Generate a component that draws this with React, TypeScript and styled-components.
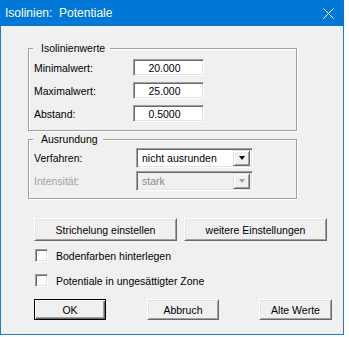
import React, { FC } from "react";
import styled, { createGlobalStyle } from "styled-components";

const GlobalStyle = createGlobalStyle`
  body {
    margin: 0;
    background: #ffffff;
    font-family: "Liberation Sans", Arial, sans-serif;
  }
`;

const Window = styled.div`
  width: 344px;
  height: 335px;
  box-sizing: border-box;
  border: 1px solid #1a7fd6;
  border-top: none;
  background: #f0f0f0;
  display: flex;
  flex-direction: column;
`;

const TitleBar = styled.div`
  height: 26px;
  margin: 0 -1px;
  background: #0078d7;
  display: flex;
  align-items: center;
  justify-content: space-between;
  padding: 0 10px 0 5px;
  color: #ffffff;
  font-size: 12px;
  white-space: pre;
`;

const Content = styled.div`
  flex: 1;
  padding: 22px 0 0 27px;
  display: flex;
  flex-direction: column;
  font-size: 10.5px;
  color: #000000;
`;

const Group = styled.div<{ $top?: number; $pt: number; $pb: number }>`
  position: relative;
  width: 269px;
  box-sizing: border-box;
  margin-top: ${({ $top }) => $top ?? 0}px;
  padding: ${({ $pt, $pb }) => `${$pt}px 0 ${$pb}px 5px`};
  border: 1px solid #a0a0a0;
  box-shadow: 1px 1px 0 #ffffff, inset 1px 1px 0 #ffffff;
  display: flex;
  flex-direction: column;
`;

const Caption = styled.span`
  position: absolute;
  top: -7px;
  left: 4px;
  padding: 0 5px 0 8px;
  background: #f0f0f0;
  line-height: 13px;
`;

const FieldRow = styled.div<{ $h: number; $gap: number; $label: number }>`
  height: ${({ $h }) => $h}px;
  margin-bottom: ${({ $gap }) => $gap}px;
  display: grid;
  grid-template-columns: ${({ $label }) => $label}px auto;
  align-items: center;
  &:last-child {
    margin-bottom: 0;
  }
`;

const Label = styled.span<{ $disabled?: boolean }>`
  color: ${({ $disabled }) => ($disabled ? "#a0a0a0" : "#000000")};
`;

const Sunken = styled.div`
  box-sizing: border-box;
  border: 1px solid;
  border-color: #a0a0a0 #ffffff #ffffff #a0a0a0;
  box-shadow: inset 1px 1px 0 #696969, inset -1px -1px 0 #e3e3e3;
`;

const EditBox = styled(Sunken)`
  width: 71px;
  height: 17px;
  background: #ffffff;
  display: flex;
  align-items: center;
  justify-content: center;
  padding-right: 8px;
`;

const Combo = styled(Sunken)<{ $disabled?: boolean }>`
  width: 117px;
  height: 20px;
  padding: 2px 2px 2px 5px;
  background: ${({ $disabled }) => ($disabled ? "#f0f0f0" : "#ffffff")};
  color: ${({ $disabled }) => ($disabled ? "#8a8a8a" : "#000000")};
  display: flex;
  align-items: center;
  justify-content: space-between;
`;

const DropButton = styled.div<{ $disabled?: boolean }>`
  width: 17px;
  height: 16px;
  box-sizing: border-box;
  border: 1px solid;
  border-color: #e3e3e3 #696969 #696969 #e3e3e3;
  box-shadow: inset 1px 1px 0 #ffffff, inset -1px -1px 0 #a0a0a0;
  background: #f0f0f0;
  display: flex;
  align-items: center;
  justify-content: center;
  &::after {
    content: "";
    border-left: 3.5px solid transparent;
    border-right: 3.5px solid transparent;
    border-top: 4px solid ${({ $disabled }) => ($disabled ? "#a0a0a0" : "#000000")};
  }
`;

const ButtonRow = styled.div<{ $top: number; $gap?: number }>`
  margin-top: ${({ $top }) => $top}px;
  padding-left: 6px;
  display: flex;
  gap: ${({ $gap }) => $gap ?? 0}px;
`;

const Button = styled.div<{ $w: number; $h: number; $default?: boolean; $ml?: number }>`
  width: ${({ $w }) => $w}px;
  height: ${({ $h }) => $h}px;
  margin-left: ${({ $ml }) => $ml ?? 0}px;
  box-sizing: border-box;
  border: 1px solid;
  border-color: ${({ $default }) =>
    $default ? "#000000" : "#ffffff #696969 #696969 #ffffff"};
  box-shadow: ${({ $default }) =>
    $default
      ? "inset 1px 1px 0 #ffffff, inset -1px -1px 0 #696969, inset -2px -2px 0 #a0a0a0"
      : "inset 1px 1px 0 #e3e3e3, inset -1px -1px 0 #a0a0a0"};
  background: #f0f0f0;
  display: flex;
  align-items: center;
  justify-content: center;
`;

const CheckList = styled.div`
  margin-top: 8px;
  padding-left: 7px;
  display: flex;
  flex-direction: column;
  gap: 12px;
`;

const CheckRow = styled.label`
  height: 13px;
  display: flex;
  align-items: center;
  gap: 8px;
`;

const CheckBox = styled(Sunken)`
  width: 13px;
  height: 13px;
  background: #ffffff;
`;

const CloseIcon: FC = () => (
  <svg width="11" height="11" viewBox="0 0 11 11">
    <path d="M0.5 0.5 L10.5 10.5 M10.5 0.5 L0.5 10.5" stroke="#ffffff" strokeWidth="1" />
  </svg>
);

const values = [
  { label: "Minimalwert:", value: "20.000" },
  { label: "Maximalwert:", value: "25.000" },
  { label: "Abstand:", value: "0.5000" },
];

const App: FC = () => {
  return (
    <>
      <GlobalStyle />
      <Window>
        <TitleBar>
          <span>{"Isolinien:  Potentiale"}</span>
          <CloseIcon />
        </TitleBar>
        <Content>
          <Group $pt={10} $pb={8}>
            <Caption>Isolinienwerte</Caption>
            {values.map((v) => (
              <FieldRow key={v.label} $h={17} $gap={6} $label={99}>
                <Label>{v.label}</Label>
                <EditBox>{v.value}</EditBox>
              </FieldRow>
            ))}
          </Group>

          <Group $top={8} $pt={8} $pb={7}>
            <Caption>Ausrundung</Caption>
            <FieldRow $h={20} $gap={3} $label={102}>
              <Label>Verfahren:</Label>
              <Combo>
                <span>nicht ausrunden</span>
                <DropButton />
              </Combo>
            </FieldRow>
            <FieldRow $h={20} $gap={3} $label={102}>
              <Label $disabled>Intensität:</Label>
              <Combo $disabled>
                <span>stark</span>
                <DropButton $disabled />
              </Combo>
            </FieldRow>
          </Group>

          <ButtonRow $top={19} $gap={7}>
            <Button $w={143} $h={23}>Strichelung einstellen</Button>
            <Button $w={143} $h={23}>weitere Einstellungen</Button>
          </ButtonRow>

          <CheckList>
            <CheckRow>
              <CheckBox />
              <span>Bodenfarben hinterlegen</span>
            </CheckRow>
            <CheckRow>
              <CheckBox />
              <span>Potentiale in ungesättigter Zone</span>
            </CheckRow>
          </CheckList>

          <ButtonRow $top={12}>
            <Button $w={72} $h={21} $default>OK</Button>
            <Button $w={72} $h={21} $ml={41}>Abbruch</Button>
            <Button $w={73} $h={21} $ml={40}>Alte Werte</Button>
          </ButtonRow>
        </Content>
      </Window>
    </>
  );
};

export default App;
